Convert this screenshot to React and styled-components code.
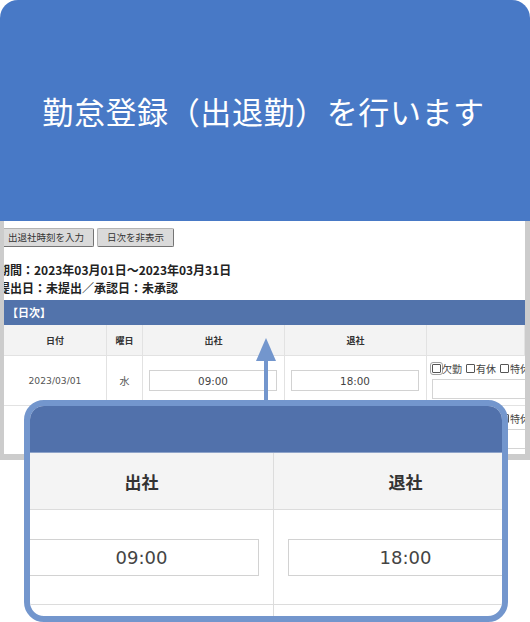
import styled, { createGlobalStyle } from "styled-components";

const GlobalStyle = createGlobalStyle`
  * {
    box-sizing: border-box;
  }

  body {
    margin: 0;
    background: #fff;
    font-family: "Noto Sans CJK JP", "Noto Sans", sans-serif;
  }
`

const Page = styled.div`
  position: relative;
  width: 530px;
  height: 622px;
  overflow: hidden;
  background: #fff;
`

const Banner = styled.header`
  height: 221px;
  background: #4879c6;
  border-radius: 18px 18px 0 0;
  display: flex;
  align-items: center;
  justify-content: center;
  padding-right: 3px;
  color: #fff;
  font-size: 31px;
  font-weight: 400;
  letter-spacing: 0.6px;
`

const Shot = styled.section`
  height: 239px;
  border: solid #cccccc;
  border-width: 0 5px 6px 4px;
  overflow: hidden;
  background: #fff;
  padding-top: 7px;
`

const Toolbar = styled.div`
  display: flex;
  gap: 3px;
  margin-left: -6px;
`

const ToolButton = styled.button`
  height: 19px;
  padding: 0 9px;
  font-family: "Noto Sans CJK JP", sans-serif;
  font-size: 9.5px;
  line-height: 17px;
  color: #333;
  background: #dadada;
  border: 1px solid #b4b4b4;
  border-right-color: #747474;
  border-bottom-color: #747474;
  border-radius: 2px;
`

const Period = styled.div`
  margin: 14px 0 3px -6px;
  font-size: 12px;
  font-weight: 700;
  line-height: 18px;
  color: #222;
  white-space: nowrap;
`

const Band = styled.div`
  height: 25px;
  line-height: 25px;
  padding-left: 3px;
  background: #5273ab;
  color: #fff;
  font-size: 11px;
  font-weight: 700;
`

const Row = styled.div`
  display: grid;
  grid-template-columns: 103px 36px 142px 142px 98px;
  height: ${props => props.$height}px;
  border-bottom: 1px solid #e2e2e2;
  background: ${props => props.$head ? '#f3f3f3' : '#fff'};
`

const HeadCell = styled.div`
  display: flex;
  align-items: center;
  justify-content: center;
  border-right: 1px solid #e2e2e2;
  font-size: 9px;
  font-weight: 700;
  color: #333;
`

const Cell = styled.div`
  display: flex;
  align-items: center;
  justify-content: ${props => props.$left ? 'flex-start' : 'center'};
  padding-left: ${props => props.$left ? '6px' : '0'};
  border-right: 1px solid #e2e2e2;
  font-family: "DejaVu Sans", sans-serif;
  font-size: 9.2px;
  color: #555;
`

const DayCell = styled(Cell)`
  font-family: "Noto Sans CJK JP", sans-serif;
  font-size: 10px;
`

const TimeBox = styled.div`
  width: 128px;
  height: 21px;
  border: 1px solid #d2d2d2;
  display: flex;
  align-items: center;
  justify-content: center;
  font-family: "DejaVu Sans", sans-serif;
  font-size: 10.4px;
  color: #444;
`

const NoteCell = styled.div`
  padding: 6px 0 0 5px;
  overflow: hidden;
`

const CheckLine = styled.div`
  display: flex;
  align-items: center;
  gap: 4px;
  height: 13px;
  white-space: nowrap;
  font-size: 10px;
  color: #444;
`

const CheckItem = styled.span`
  display: flex;
  align-items: center;
  gap: 1px;
`

const CheckBox = styled.span`
  width: 9px;
  height: 9px;
  border: 1px solid #555;
  border-radius: 1px;
  background: #fff;
  outline: ${props => props.$focused ? '1px solid #a0a0a0' : 'none'};
  outline-offset: 1px;
`

const NoteBox = styled.div`
  margin-top: 4px;
  width: 130px;
  height: 20px;
  border: 1px solid #d4d4d4;
`

const Callout = styled.div`
  position: absolute;
  left: 24px;
  top: 400px;
  width: 484px;
  height: 222px;
  border: 6px solid #7396cd;
  border-radius: 20px;
  overflow: hidden;
  background: #fff;
`

const CalloutBand = styled.div`
  height: 47px;
  background: #5171ab;
  border-bottom: 1px solid #8ea3c9;
`

const ZoomGrid = styled.div`
  display: grid;
  grid-template-columns: 264px 264px;
  margin-left: -20px;
`

const ZoomHead = styled.div`
  height: 57px;
  display: flex;
  align-items: center;
  justify-content: center;
  background: #f4f4f4;
  border-right: 1px solid #dcdcdc;
  border-bottom: 1px solid #dcdcdc;
  font-size: 17px;
  font-weight: 700;
  color: #333;
`

const ZoomCell = styled.div`
  height: ${props => props.$height}px;
  display: flex;
  align-items: center;
  padding: 0 14px;
  border-right: 1px solid #dcdcdc;
  border-bottom: 1px solid #dcdcdc;
`

const ZoomTime = styled.div`
  width: 100%;
  height: 37px;
  border: 1px solid #d2d2d2;
  display: flex;
  align-items: center;
  justify-content: center;
  font-family: "DejaVu Sans", sans-serif;
  font-size: 18px;
  color: #444;
`

const Pointer = styled.svg`
  position: absolute;
  left: 255px;
  top: 338px;
`

const days = [
  { date: '2023/03/01', day: '水', start: '09:00', end: '18:00', height: 50 },
  { date: '2023/03/02', day: '木', start: '09:00', end: '18:00', height: 50 },
]

const Notes = ({ focused }) => (
  <NoteCell>
    <CheckLine>
      <CheckItem><CheckBox $focused={focused}/>欠勤</CheckItem>
      <CheckItem><CheckBox/>有休</CheckItem>
      <CheckItem><CheckBox/>特休</CheckItem>
    </CheckLine>
    <NoteBox/>
  </NoteCell>
)

export default function App() {
  return (
    <Page>
      <GlobalStyle/>
      <Banner>勤怠登録（出退勤）を行います</Banner>

      <Shot>
        <Toolbar>
          <ToolButton>出退社時刻を入力</ToolButton>
          <ToolButton>日次を非表示</ToolButton>
        </Toolbar>
        <Period>
          期間：2023年03月01日～2023年03月31日<br/>
          提出日：未提出／承認日：未承認
        </Period>
        <Band>【日次】</Band>
        <Row $head $height={31}>
          <HeadCell>日付</HeadCell>
          <HeadCell>曜日</HeadCell>
          <HeadCell>出社</HeadCell>
          <HeadCell>退社</HeadCell>
          <HeadCell/>
        </Row>
        {days.map((d, i) => (
          <Row key={d.date} $height={d.height}>
            <Cell>{d.date}</Cell>
            <DayCell>{d.day}</DayCell>
            <Cell $left><TimeBox>{d.start}</TimeBox></Cell>
            <Cell $left><TimeBox>{d.end}</TimeBox></Cell>
            <Notes focused={i === 0}/>
          </Row>
        ))}
      </Shot>

      <Pointer width="22" height="64" viewBox="0 0 22 64">
        <polygon points="11,0 1,23 21,23" fill="#7396cd"/>
        <rect x="9" y="22" width="4" height="42" fill="#7396cd"/>
      </Pointer>

      <Callout>
        <CalloutBand/>
        <ZoomGrid>
          <ZoomHead>出社</ZoomHead>
          <ZoomHead>退社</ZoomHead>
          <ZoomCell $height={95}><ZoomTime>09:00</ZoomTime></ZoomCell>
          <ZoomCell $height={95}><ZoomTime>18:00</ZoomTime></ZoomCell>
          <ZoomCell $height={40}/>
          <ZoomCell $height={40}/>
        </ZoomGrid>
      </Callout>
    </Page>
  )
}
